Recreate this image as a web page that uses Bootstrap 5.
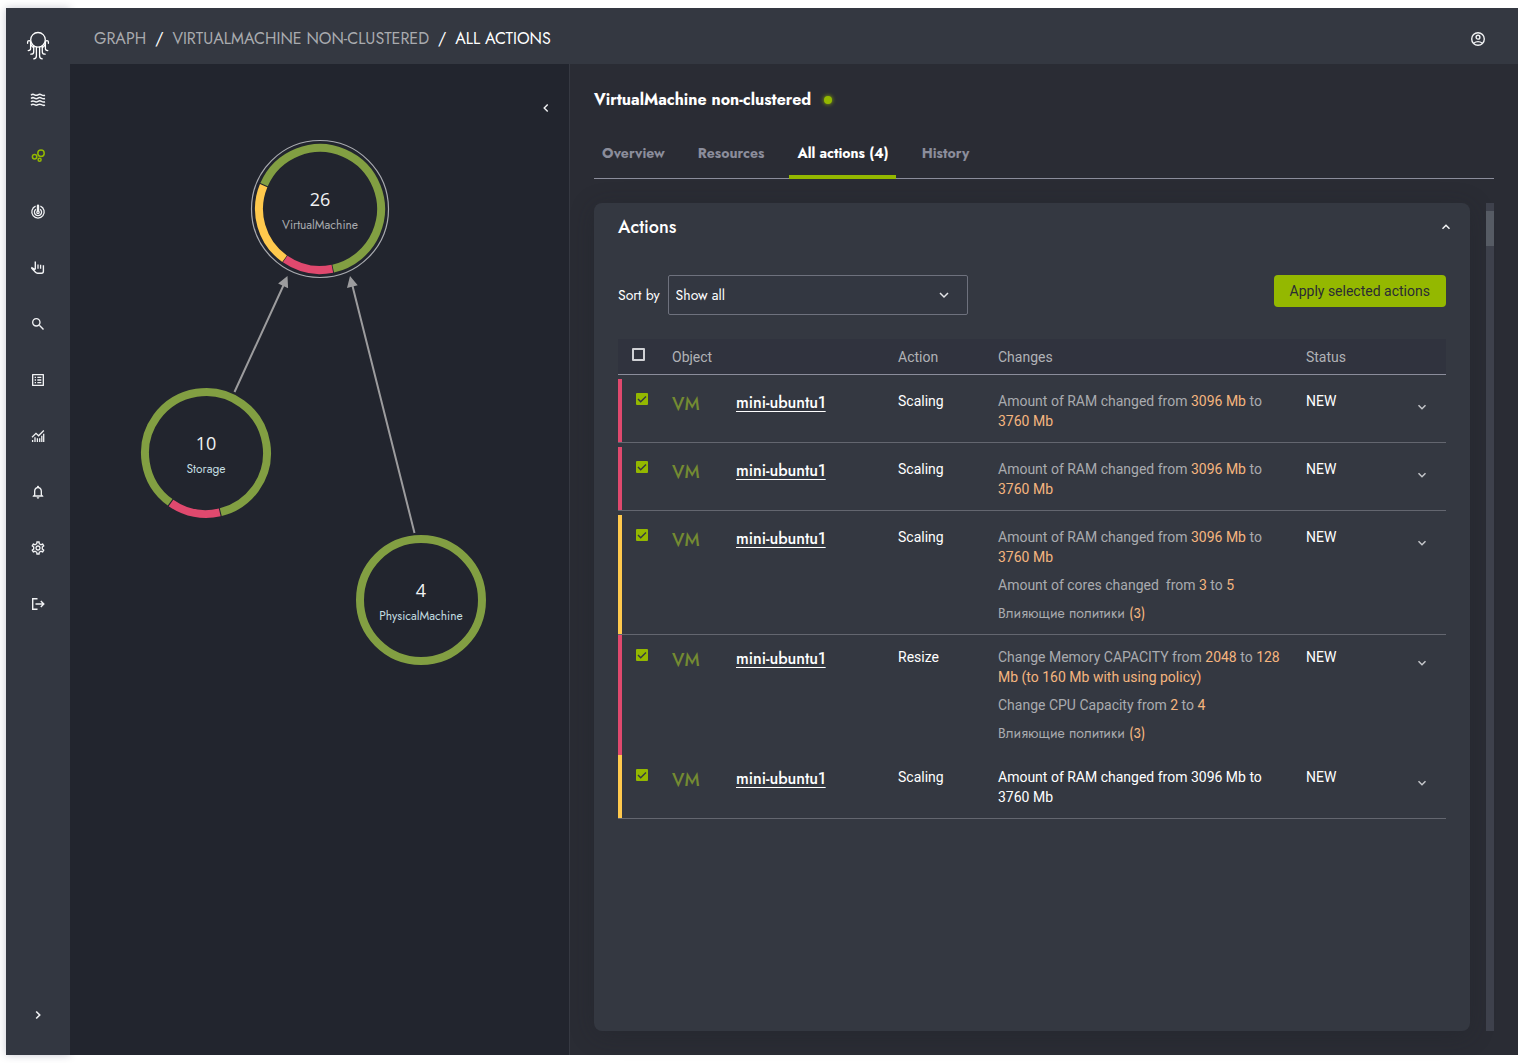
<!DOCTYPE html>
<html lang="en">
<head>
<meta charset="utf-8">
<meta name="viewport" content="width=device-width, initial-scale=1">
<title>VirtualMachine non-clustered – All actions</title>
<link href="https://cdn.jsdelivr.net/npm/bootstrap@5.3.0/dist/css/bootstrap.min.css" rel="stylesheet">
<style>
  :root {
    --lime: #94b800;
    --olive: #829f42;
    --rose: #e0496e;
    --amber: #ffc94d;
    --peach: #f5b57f;
    --surface: #343841;
    --geo: Jost, Lato, sans-serif;
  }
  body { background: #fff; color: #fff; font: 14px/20px Roboto, sans-serif; }
  .app-shell { min-height: 100vh; padding: 8px 0 8px 6px; }
  .geo { font-family: var(--geo); }

  .side-rail { width: 64px; background: #333741; box-shadow: 0 0 8px rgba(40, 40, 70, .25); }
  .side-logo { height: 64px; padding-top: 12px; }
  .side-rail .nav-link { height: 56px; padding: 0; color: #f1f2f4; }
  .side-rail .nav-link.active { color: var(--lime); }
  .side-expand { height: 80px; }
  .plain-btn { background: none; border: 0; padding: 0; color: #f1f2f4; display: flex; align-items: center; justify-content: center; }
  .main-area { background: #2a2c34; min-width: 0; }
  .top-bar { height: 56px; background: var(--surface); padding: 5px 32px 0 24px; }
  .crumbs { --bs-breadcrumb-divider-color: #fff; --bs-breadcrumb-item-padding-x: 9px; --bs-breadcrumb-margin-bottom: 0; font-size: 16px; line-height: 24px; text-transform: uppercase; }
  .crumbs a { color: #a9abaf; text-decoration: none; }
  .crumbs .active { color: #fff; }

  .graph-pane { width: 500px; background: #22252e; border-right: 1px solid #363942; }
  .graph-toggle { position: absolute; top: 32px; right: 11px; width: 24px; height: 24px; }
  .node-count { font: 18px "Open Sans", "Noto Sans", sans-serif; fill: #f1f2f4; text-anchor: middle; }
  .node-name { font: 12px var(--geo); fill: #c3dde0; text-anchor: middle; }
  .node-name.is-selected { fill: #a9abaf; }

  .detail-pane { padding: 24px; min-width: 0; }
  .detail-head { gap: 13px; }
  .detail-title { font-size: 16px; line-height: 24px; font-weight: 700; }
  .live-dot { width: 8px; height: 8px; background: var(--lime); box-shadow: 0 0 4px var(--lime); }
  .detail-tabs { margin-top: 17px; gap: 17px; border-bottom: 1px solid #8b8d9b; font-weight: 700; line-height: 24px; }
  .detail-tabs .nav-link { min-width: 64px; padding: 12px 8px 10px; margin-bottom: -1px; border-bottom: 4px solid transparent; color: #8b8d9b; text-align: center; }
  .detail-tabs .nav-link.active { color: #fff; border-color: var(--lime); }

  .actions-panel { background: var(--surface); border-radius: 8px; padding: 12px 24px 24px; min-width: 0; box-shadow: 0 4px 24px rgba(30, 32, 40, .3); }
  .actions-title { font-size: 18px; line-height: 24px; font-weight: 500; }
  .panel-toggle { width: 24px; height: 24px; margin-right: -12px; }
  .sort-row { margin-top: 36px; }
  .sort-select { width: 300px; height: 40px; border-radius: 2px; border-color: #6e717d; background-color: #333741; color: #fff; padding: 0 32px 0 7px; font-size: 14px;
    background-image: url("data:image/svg+xml,%3Csvg xmlns='http://www.w3.org/2000/svg' viewBox='0 0 16 16' fill='none' stroke='%23e4e5e8' stroke-width='1.5'%3E%3Cpath d='M4 6l4 4 4-4'/%3E%3C/svg%3E"); background-position: right 15px center; background-size: 16px; }
  .apply-btn { height: 32px; padding: 0 16px; border: 0; border-radius: 4px; background: var(--lime); color: #2a2c34; font-size: 14px; line-height: 20px; }

  .actions-table { margin-top: 24px; table-layout: fixed; border-collapse: separate; border-spacing: 0; width: 100%; }
  .actions-table th { height: 36px; padding: 0; font-weight: 400; color: #b0b2b6; background: #30333e; border-bottom: 1px solid #8b8d9b; vertical-align: middle; }
  .actions-table td { padding: 12px 0 11px; border-bottom: 1px solid #63666f; vertical-align: top; }
  .actions-table .spaced td { border-top: 4px solid transparent; }
  .actions-table .joined td { border-bottom: 0; padding-bottom: 12px; }
  .actions-table td:first-child { padding-left: 18px; background: linear-gradient(var(--bar), var(--bar)) left / 4px 100% no-repeat padding-box; }
  .sev-high { --bar: var(--rose); }
  .sev-mid { --bar: var(--amber); }
  .c-check { width: 54px; } .c-kind { width: 64px; } .c-name { width: 162px; } .c-act { width: 100px; } .c-stat { width: 92px; } .c-open { width: 48px; }
  .tick[type=checkbox] { display: block; width: 12px; height: 12px; margin: 2px 0 0; border-radius: 1px; border: 0; background-color: transparent; }
  .tick-all[type=checkbox] { width: 13px; height: 13px; margin: 0 0 4px 14px; border: 2px solid #d0d1d5; }
  .tick[type=checkbox]:checked { background-color: var(--lime); background-size: 12px;
    background-image: url("data:image/svg+xml,%3Csvg xmlns='http://www.w3.org/2000/svg' viewBox='0 0 12 12' fill='none' stroke='%23343841' stroke-width='1.4'%3E%3Cpath d='M2 6l2.7 2.7L10 3.4'/%3E%3C/svg%3E"); }
  .kind { font-size: 18px; line-height: 24px; font-weight: 500; color: #748b32; padding-top: 1px; }
  .obj-link { font-size: 16px; line-height: 24px; font-weight: 500; color: #fff; text-underline-offset: 3px; text-decoration-thickness: 1px; }
  .changes p { margin: 0 0 8px; padding-right: 12px; color: #a9abaf; }
  .changes p:last-child { margin-bottom: 0; }
  .changes b { font-weight: 400; color: var(--peach); }
  .changes .plain { color: #fff; }
  .row-open { width: 48px; height: 32px; color: #c4c6ca; }

  .scroll-track { width: 8px; background: #3e414c; padding-top: 8px; }
  .scroll-thumb { height: 35px; background: #565b64; }
</style>
</head>
<body>
<svg width="0" height="0" class="position-absolute" aria-hidden="true">
  <symbol id="chev" viewBox="0 0 16 16"><path d="M4.500 6.200L8 9.700l3.500-3.500" fill="none" stroke="currentColor" stroke-width="1.500"/></symbol>
</svg>
<div class="app-shell d-flex">
  <aside class="side-rail d-flex flex-column flex-shrink-0">
    <a href="#" class="side-logo d-flex justify-content-center align-items-center text-white" aria-label="Home">
      <svg width="24" height="30" viewBox="0 0 24 30" fill="none" stroke="currentColor" stroke-width="1.300" stroke-linecap="round">
        <circle cx="12" cy="8.800" r="7.300"/>
        <path d="M1.600 12.300V11q0-1.300 1.500-1.300t1.500 1.500v6.600q0 1.800-2.400 1.800M7.700 15.300V21q0 2.200-2.900 2.200M10.400 16.300v8.800q0 2.700-2.700 2.700"/>
        <path d="M22.400 12.300V11q0-1.300-1.500-1.300t-1.500 1.500v6.600q0 1.800 2.400 1.800M16.300 15.300V21q0 2.200 2.900 2.200M13.600 16.300v8.800q0 2.700 2.700 2.700"/>
        <path d="M5 13.600q.6 2 2.700 3M19 13.600q-.6 2-2.700 3"/>
      </svg>
    </a>
    <nav class="nav flex-column" aria-label="Main">
      <a class="nav-link d-flex align-items-center justify-content-center" href="#" aria-label="Streams"><svg width="16" height="16" viewBox="0 0 16 16" fill="none" stroke="currentColor" stroke-width="1.500"><path d="M1 3.200q1.700-1.500 3.500-.4t3.500 0 3.500 0T15 3.200M1 6.500q1.700-1.500 3.500-.4t3.500 0 3.500 0T15 6.500M1 9.800q1.700-1.500 3.500-.4t3.500 0 3.500 0T15 9.800M1 13.100q1.700-1.500 3.500-.4t3.500 0 3.500 0 3.500.4"/></svg></a>
      <a class="nav-link active d-flex align-items-center justify-content-center" href="#" aria-label="Graph" aria-current="page"><svg width="16" height="16" viewBox="0 0 16 16" fill="none" stroke="currentColor" stroke-width="1.500"><circle cx="11" cy="5.200" r="3.200"/><circle cx="4.600" cy="8.800" r="2.200"/><circle cx="9.600" cy="11.700" r="1.500"/></svg></a>
      <a class="nav-link d-flex align-items-center justify-content-center" href="#" aria-label="Targets"><svg width="16" height="16" viewBox="0 0 16 16" fill="none" stroke="currentColor" stroke-width="1.300"><path d="M5.600 2.200a6.200 6.200 0 1 0 4.800 0M5.900 5.200a3.600 3.600 0 1 0 4.200 0"/><circle cx="8" cy="8.300" r="1.200"/><path d="M8 1.700v4.500" stroke-width="2.400" stroke-linecap="round"/></svg></a>
      <a class="nav-link d-flex align-items-center justify-content-center" href="#" aria-label="Manual actions"><svg width="16" height="16" viewBox="0 0 16 16" fill="none" stroke="currentColor" stroke-width="1.400" stroke-linejoin="round"><path d="M5.300 9.500V1.500M1.300 7.400L5.300 9.600M1.300 7.800l4.200 4.500q.8.900 2 .9h4q1.900 0 1.900-1.900V5.200"/><path d="M8 4.500v4.200M10.600 4.800v3.900" stroke-width="1.300"/></svg></a>
      <a class="nav-link d-flex align-items-center justify-content-center" href="#" aria-label="Search"><svg width="16" height="16" viewBox="0 0 24 24" fill="currentColor"><path d="M9.500,3A6.500,6.500 0 0,1 16,9.500C16,11.110 15.410,12.590 14.440,13.730L14.710,14H15.500L21,19.500L19.500,21L14,15.500V14.710L13.730,14.440C12.590,15.410 11.110,16 9.500,16A6.500,6.500 0 0,1 3,9.500A6.500,6.500 0 0,1 9.500,3M9.500,5C7,5 5,7 5,9.500C5,12 7,14 9.500,14C12,14 14,12 14,9.500C14,7 12,5 9.500,5Z"/></svg></a>
      <a class="nav-link d-flex align-items-center justify-content-center" href="#" aria-label="Reports"><svg width="16" height="16" viewBox="0 0 24 24" fill="currentColor"><path d="M19 5v14H5V5h14m1.100-2H3.900c-.5 0-.9.4-.9.9v16.200c0 .4.4.9.9.9h16.200c.4 0 .9-.5.9-.9V3.900c0-.5-.5-.9-.9-.9zM11 7h6v2h-6V7zm0 4h6v2h-6v-2zm0 4h6v2h-6zM7 7h2v2H7zm0 4h2v2H7zm0 4h2v2H7z"/></svg></a>
      <a class="nav-link d-flex align-items-center justify-content-center" href="#" aria-label="Analytics"><svg width="16" height="16" viewBox="0 0 16 16" fill="none" stroke="currentColor" stroke-width="1.300"><path d="M2 9.300l4-4 2.600 2.500L13.800 2.500"/><path d="M2.600 14v-2M5 14V9.300M7.400 14v-3.800M9.700 14v-3.800M11.800 14V7.800M13.700 14V5.800" stroke-width="1.300"/></svg></a>
      <a class="nav-link d-flex align-items-center justify-content-center" href="#" aria-label="Notifications"><svg width="16" height="16" viewBox="0 0 24 24" fill="currentColor"><path d="M12 22c1.100 0 2-.9 2-2h-4c0 1.100.9 2 2 2zm6-6v-5c0-3.070-1.630-5.640-4.500-6.320V4c0-.83-.67-1.500-1.500-1.500s-1.500.67-1.500 1.500v.68C7.640 5.360 6 7.920 6 11v5l-2 2v1h16v-1l-2-2zm-2 1H8v-6c0-2.480 1.510-4.500 4-4.500s4 2.020 4 4.500v6z"/></svg></a>
      <a class="nav-link d-flex align-items-center justify-content-center" href="#" aria-label="Settings"><svg width="16" height="16" viewBox="0 0 24 24" fill="currentColor"><path d="M19.430 12.980c.04-.32.07-.64.07-.98 0-.34-.03-.66-.07-.98l2.110-1.650c.19-.15.24-.42.12-.64l-2-3.460c-.09-.16-.26-.25-.44-.25-.06 0-.12.01-.17.03l-2.490 1c-.52-.4-1.080-.73-1.690-.98l-.38-2.650C14.460 2.180 14.250 2 14 2h-4c-.25 0-.46.18-.49.42l-.38 2.650c-.61.25-1.170.59-1.690.98l-2.490-1c-.06-.02-.12-.03-.18-.03-.17 0-.34.09-.43.25l-2 3.460c-.13.22-.07.49.12.64l2.110 1.650c-.04.32-.07.65-.07.98 0 .33.03.66.07.98l-2.110 1.650c-.19.15-.24.42-.12.64l2 3.460c.09.16.26.25.44.25.06 0 .12-.01.17-.03l2.490-1c.52.4 1.080.73 1.690.98l.38 2.650c.03.24.24.42.49.42h4c.25 0 .46-.18.49-.42l.38-2.650c.61-.25 1.170-.59 1.690-.98l2.490 1c.06.02.12.03.18.03.17 0 .34-.09.43-.25l2-3.460c.12-.22.07-.49-.12-.64l-2.110-1.650zm-1.980-1.710c.04.31.05.52.05.73 0 .21-.02.43-.05.73l-.14 1.130.89.7 1.080.84-.7 1.210-1.270-.51-1.040-.42-.9.68c-.43.32-.84.56-1.250.73l-1.060.43-.16 1.130-.2 1.350h-1.400l-.19-1.350-.16-1.130-1.060-.43c-.43-.18-.83-.41-1.230-.71l-.91-.7-1.060.43-1.270.51-.7-1.210 1.080-.84.89-.7-.14-1.130c-.03-.31-.05-.54-.05-.74s.02-.43.05-.73l.14-1.130-.89-.7-1.080-.84.7-1.210 1.270.51 1.040.42.9-.68c.43-.32.84-.56 1.250-.73l1.060-.43.16-1.130.2-1.350h1.390l.19 1.350.16 1.130 1.060.43c.43.18.83.41 1.230.71l.91.7 1.060-.43 1.270-.51.7 1.210-1.070.85-.89.7.14 1.130zM12 8c-2.210 0-4 1.790-4 4s1.790 4 4 4 4-1.790 4-4-1.790-4-4-4zm0 6c-1.100 0-2-.9-2-2s.9-2 2-2 2 .9 2 2-.9 2-2 2z"/></svg></a>
      <a class="nav-link d-flex align-items-center justify-content-center" href="#" aria-label="Log out"><svg width="16" height="16" viewBox="0 0 16 16" fill="none" stroke="currentColor" stroke-width="1.400"><path d="M7.500 2.700H2.700v10.600h4.800M5.500 8h8M10.800 5L13.800 8l-3 3"/></svg></a>
    </nav>
    <button class="plain-btn side-expand mt-auto" type="button" aria-label="Expand menu"><svg width="16" height="16" viewBox="0 0 16 16" fill="none" stroke="currentColor" stroke-width="1.600"><path d="M6.200 4.500L9.700 8l-3.500 3.500"/></svg></button>
  </aside>

  <div class="main-area d-flex flex-column flex-grow-1">
    <header class="top-bar d-flex align-items-center justify-content-between">
      <nav aria-label="Breadcrumb">
        <ol class="breadcrumb crumbs geo">
          <li class="breadcrumb-item"><a href="#">Graph</a></li>
          <li class="breadcrumb-item"><a href="#">VirtualMachine non-clustered</a></li>
          <li class="breadcrumb-item active" aria-current="page">All actions</li>
        </ol>
      </nav>
      <button class="plain-btn" type="button" aria-label="Account"><svg width="16" height="16" viewBox="0 0 16 16" fill="none" stroke="currentColor" stroke-width="1.400"><circle cx="8" cy="8" r="6.300"/><circle cx="8" cy="6.200" r="1.900"/><path d="M3.600 12.200q4.400-3.200 8.800 0"/></svg></button>
    </header>

    <div class="d-flex flex-grow-1">
      <section class="graph-pane position-relative flex-shrink-0" aria-label="Dependency graph">
        <svg width="499" height="640" viewBox="0 0 499 640" fill="none">
          <g stroke="#9c9c9e" stroke-width="2"><path d="M164.500 328L215 218M344.500 469L282 220"/></g>
          <path d="M217.500 212l.6 12.300-10-4.700zM280 212l7.700 9.300-10.700 2.700z" fill="#9c9c9e"/>
          <g stroke-width="8">
            <circle cx="250" cy="145" r="68.500" stroke="#a9abb0" stroke-width="1.200"/>
            <circle cx="250" cy="145" r="61" stroke="#829f42" pathLength="360" stroke-dasharray="234 126" transform="rotate(203.500 250 145)"/>
            <circle cx="250" cy="145" r="61" stroke="#e0496e" pathLength="360" stroke-dasharray="46.500 313.500" transform="rotate(78.300 250 145)"/>
            <circle cx="250" cy="145" r="61" stroke="#ffc94d" pathLength="360" stroke-dasharray="77 283" transform="rotate(125.500 250 145)"/>
            <circle cx="136" cy="389" r="61" stroke="#829f42" pathLength="360" stroke-dasharray="310 50" transform="rotate(126 136 389)"/>
            <circle cx="136" cy="389" r="61" stroke="#e0496e" pathLength="360" stroke-dasharray="48 312" transform="rotate(77 136 389)"/>
            <circle cx="351" cy="536" r="61" stroke="#829f42"/>
          </g>
          <text class="node-count" x="250" y="142">26</text><text class="node-name is-selected" x="250" y="165">VirtualMachine</text>
          <text class="node-count" x="136" y="386">10</text><text class="node-name" x="136" y="409">Storage</text>
          <text class="node-count" x="351" y="533">4</text><text class="node-name" x="351" y="556">PhysicalMachine</text>
        </svg>
        <button class="plain-btn graph-toggle" type="button" aria-label="Collapse graph"><svg width="16" height="16" viewBox="0 0 16 16" fill="none" stroke="currentColor" stroke-width="1.400"><path d="M9.700 4.500L6.200 8l3.500 3.500"/></svg></button>
      </section>

      <main class="detail-pane d-flex flex-column flex-grow-1">
        <div class="detail-head d-flex align-items-center">
          <h1 class="detail-title geo mb-0">VirtualMachine non-clustered</h1>
          <span class="live-dot rounded-circle"></span>
        </div>
        <nav class="nav detail-tabs geo" aria-label="Details">
          <a class="nav-link" href="#">Overview</a>
          <a class="nav-link" href="#">Resources</a>
          <a class="nav-link active" href="#" aria-current="page">All actions (4)</a>
          <a class="nav-link" href="#">History</a>
        </nav>

        <div class="d-flex flex-grow-1 gap-3 mt-4">
          <section class="actions-panel flex-grow-1">
            <div class="d-flex justify-content-between">
              <h2 class="actions-title geo mb-0">Actions</h2>
              <button class="plain-btn panel-toggle" type="button" aria-label="Collapse actions"><svg width="16" height="16" viewBox="0 0 16 16" fill="none" stroke="currentColor" stroke-width="1.500"><path d="M4.500 9.700L8 6.200l3.500 3.500"/></svg></button>
            </div>
            <div class="sort-row d-flex justify-content-between align-items-start">
              <div class="d-flex align-items-center gap-2 geo">
                <label for="sortBy">Sort by</label>
                <select id="sortBy" class="form-select sort-select"><option>Show all</option></select>
              </div>
              <button class="btn apply-btn" type="button">Apply selected actions</button>
            </div>

            <table class="actions-table">
              <colgroup><col class="c-check"><col class="c-kind"><col class="c-name"><col class="c-act"><col><col class="c-stat"><col class="c-open"></colgroup>
              <thead><tr><th><input class="form-check-input tick tick-all" type="checkbox" aria-label="Select all"></th><th colspan="2">Object</th><th>Action</th><th>Changes</th><th>Status</th><th></th></tr></thead>
              <tbody>
                <tr class="sev-high spaced"><td><input class="form-check-input tick" type="checkbox" checked aria-label="Select action 1"></td><td><div class="kind geo">VM</div></td><td><a href="#" class="obj-link geo">mini-ubuntu1</a></td><td>Scaling</td>
                  <td class="changes"><p>Amount of RAM changed from <b>3096 Mb</b> to <b>3760 Mb</b></p></td><td>NEW</td><td><button class="plain-btn row-open" type="button" aria-label="Expand action 1"><svg width="16" height="16"><use href="#chev"/></svg></button></td></tr>
                <tr class="sev-high spaced"><td><input class="form-check-input tick" type="checkbox" checked aria-label="Select action 2"></td><td><div class="kind geo">VM</div></td><td><a href="#" class="obj-link geo">mini-ubuntu1</a></td><td>Scaling</td>
                  <td class="changes"><p>Amount of RAM changed from <b>3096 Mb</b> to <b>3760 Mb</b></p></td><td>NEW</td><td><button class="plain-btn row-open" type="button" aria-label="Expand action 2"><svg width="16" height="16"><use href="#chev"/></svg></button></td></tr>
                <tr class="sev-mid spaced"><td><input class="form-check-input tick" type="checkbox" checked aria-label="Select action 3"></td><td><div class="kind geo">VM</div></td><td><a href="#" class="obj-link geo">mini-ubuntu1</a></td><td>Scaling</td>
                  <td class="changes"><p>Amount of RAM changed from <b>3096 Mb</b> to <b>3760 Mb</b></p><p>Amount of cores changed&nbsp; from <b>3</b> to <b>5</b></p><p class="geo">Влияющие политики <b>(3)</b></p></td><td>NEW</td><td><button class="plain-btn row-open" type="button" aria-label="Expand action 3"><svg width="16" height="16"><use href="#chev"/></svg></button></td></tr>
                <tr class="sev-high joined"><td><input class="form-check-input tick" type="checkbox" checked aria-label="Select action 4"></td><td><div class="kind geo">VM</div></td><td><a href="#" class="obj-link geo">mini-ubuntu1</a></td><td>Resize</td>
                  <td class="changes"><p>Change Memory CAPACITY from <b>2048</b> to <b>128</b> <b>Mb (to 160 Mb with using policy)</b></p><p>Change CPU Capacity from <b>2</b> to <b>4</b></p><p class="geo">Влияющие политики <b>(3)</b></p></td><td>NEW</td><td><button class="plain-btn row-open" type="button" aria-label="Expand action 4"><svg width="16" height="16"><use href="#chev"/></svg></button></td></tr>
                <tr class="sev-mid"><td><input class="form-check-input tick" type="checkbox" checked aria-label="Select action 5"></td><td><div class="kind geo">VM</div></td><td><a href="#" class="obj-link geo">mini-ubuntu1</a></td><td>Scaling</td>
                  <td class="changes"><p class="plain">Amount of RAM changed from 3096 Mb to 3760 Mb</p></td><td>NEW</td><td><button class="plain-btn row-open" type="button" aria-label="Expand action 5"><svg width="16" height="16"><use href="#chev"/></svg></button></td></tr>
              </tbody>
            </table>
          </section>
          <div class="scroll-track flex-shrink-0" aria-hidden="true"><div class="scroll-thumb"></div></div>
        </div>
      </main>
    </div>
  </div>
</div>
<script src="https://cdn.jsdelivr.net/npm/bootstrap@5.3.0/dist/js/bootstrap.bundle.min.js"></script>
</body>
</html>
